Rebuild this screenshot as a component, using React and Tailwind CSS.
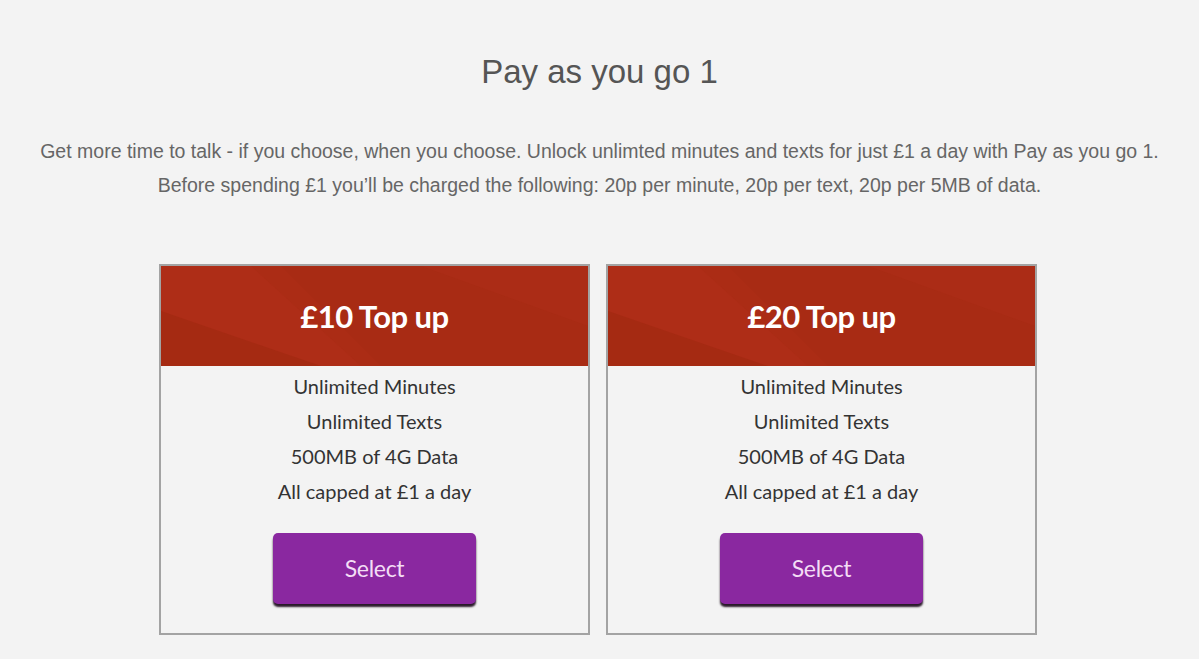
import React from "react";

function Card({ title }) {
  return (
    <div className="w-[431px] border-2 border-[#a3a3a3] bg-[#f3f3f3] flex flex-col">
      <div className="relative h-[100px] bg-[#a92c14] overflow-hidden flex items-center justify-center">
        <svg className="absolute inset-0 w-full h-full" viewBox="0 0 427 100" preserveAspectRatio="none">
          <polygon points="0,0 120,0 220,100 0,100" fill="#b3301a" opacity="0.55" />
          <polygon points="0,45 160,100 0,100" fill="#a32912" opacity="0.8" />
          <polygon points="90,0 427,0 427,100 200,100" fill="#a82b14" opacity="0.6" />
          <polygon points="260,0 427,0 427,60" fill="#ad2e17" opacity="0.5" />
        </svg>
        <span className="relative text-white font-bold text-[31px] tracking-[-0.5px]" style={{ fontFamily: "Lato, 'Open Sans', sans-serif" }}>
          {title}
        </span>
      </div>
      <div className="flex flex-col items-center pt-[3px] pb-[29px] text-[#333] text-[20px] leading-[35px]" style={{ fontFamily: "Lato, 'Open Sans', sans-serif" }}>
        <div>Unlimited Minutes</div>
        <div>Unlimited Texts</div>
        <div>500MB of 4G Data</div>
        <div>All capped at £1 a day</div>
        <button className="mt-[24px] w-[203px] h-[71px] rounded-[5px] bg-[#8a28a0] text-[#f3ddf5] text-[23px] tracking-[-0.3px] shadow-[0_3px_2px_#2a1a2a]">
          Select
        </button>
      </div>
    </div>
  );
}

export default function App() {
  return (
    <div className="w-[1199px] h-[659px] bg-[#f3f3f3] overflow-hidden" style={{ fontFamily: "'Liberation Sans', Arial, sans-serif" }}>
      <h1 className="text-center text-[33px] leading-[36px] text-[#555] pt-[54px]">Pay as you go 1</h1>
      <div className="mt-[44px] text-center text-[#666] text-[19.5px] leading-[34px]">
        <p>Get more time to talk - if you choose, when you choose. Unlock unlimted minutes and texts for just £1 a day with Pay as you go 1.</p>
        <p>Before spending £1 you’ll be charged the following: 20p per minute, 20p per text, 20p per 5MB of data.</p>
      </div>
      <div className="mt-[62px] flex justify-center gap-[16px] pr-[3px]">
        <Card title="£10 Top up" />
        <Card title="£20 Top up" />
      </div>
    </div>
  );
}
